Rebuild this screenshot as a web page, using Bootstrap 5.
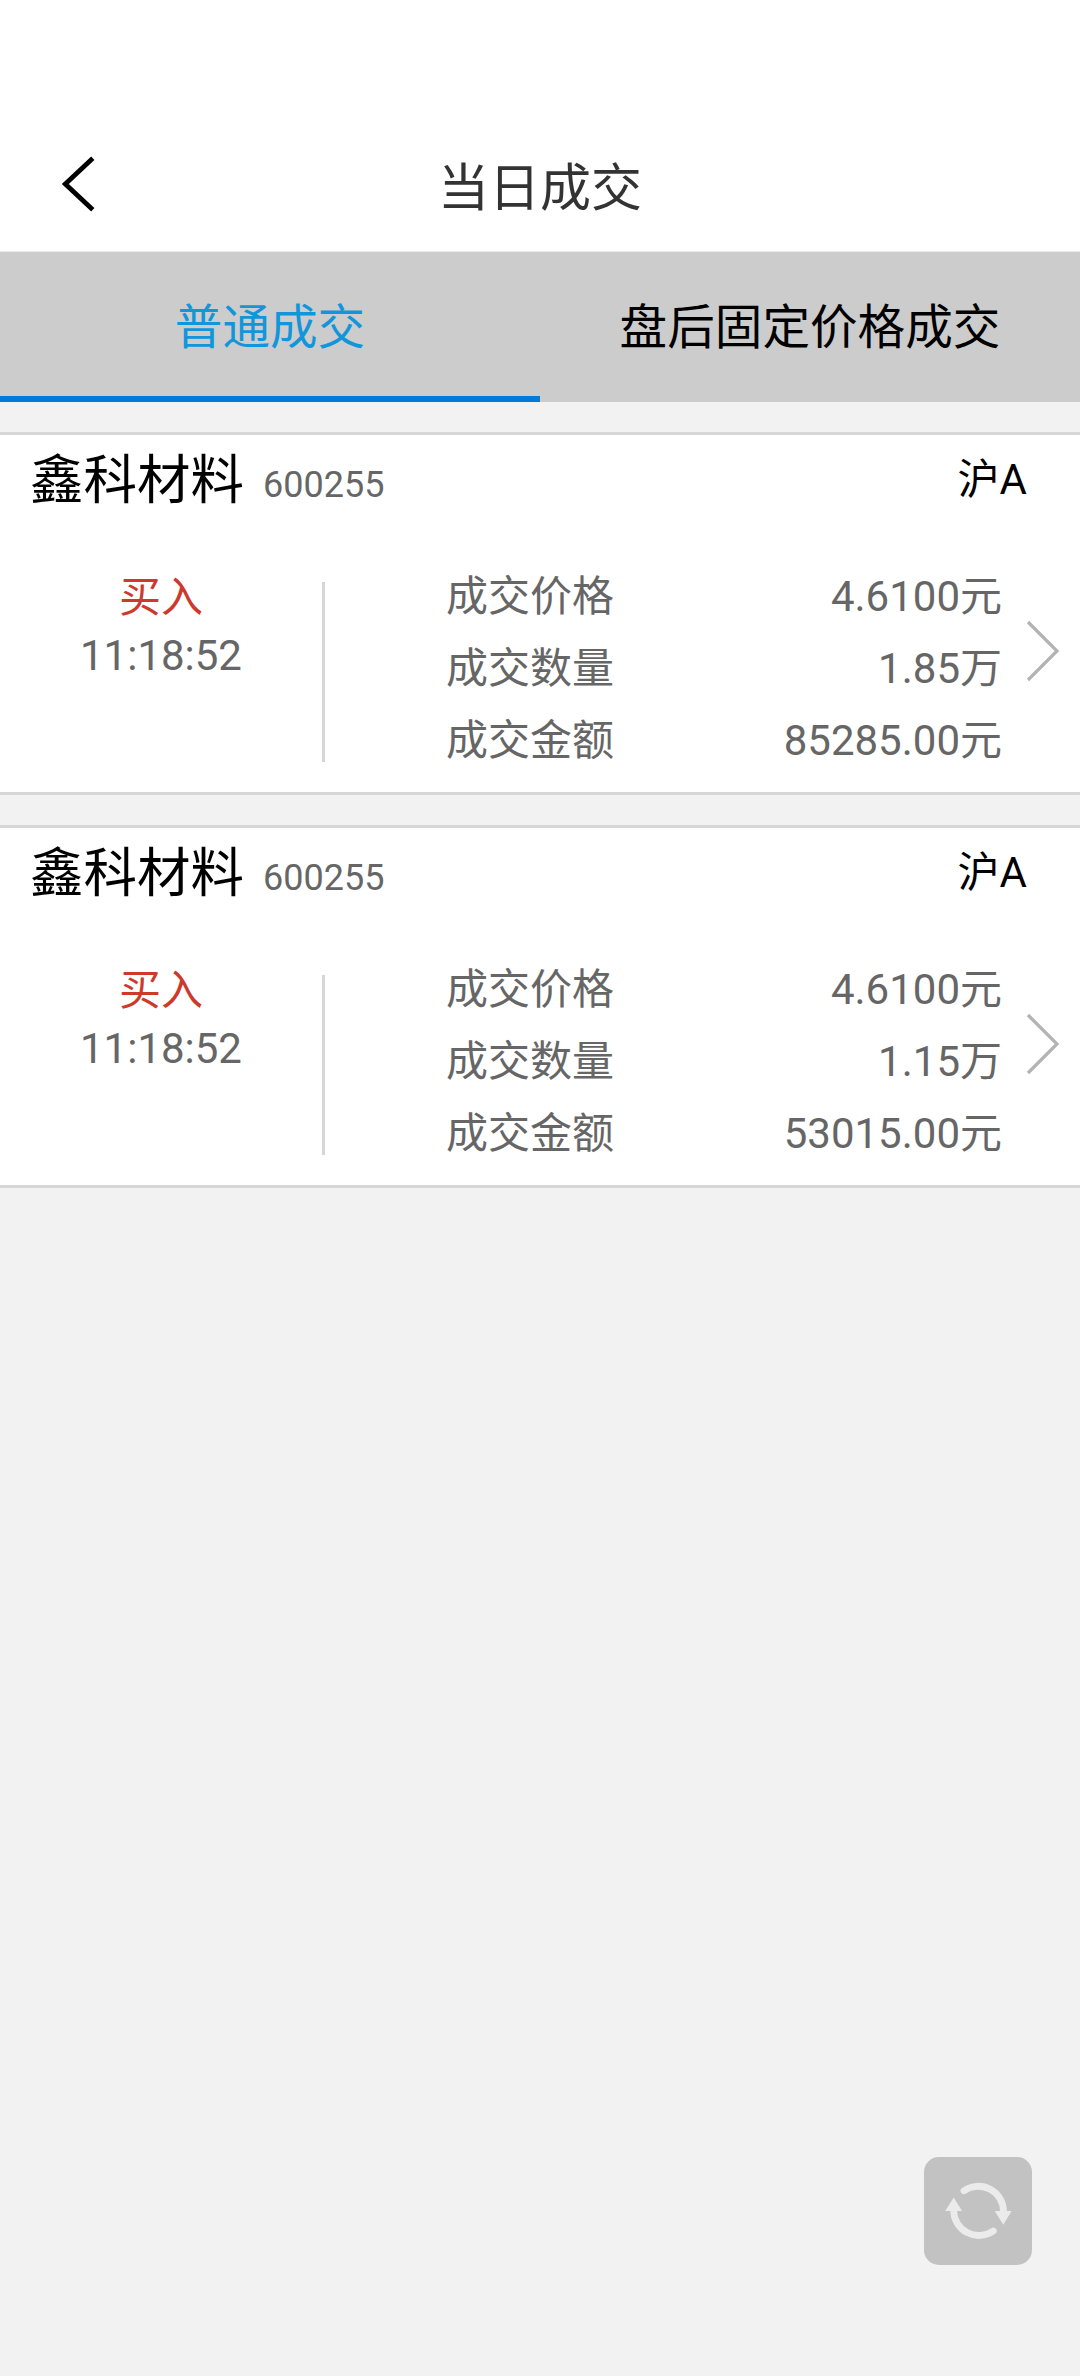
<!DOCTYPE html>
<html lang="zh-CN">
<head>
<meta charset="utf-8">
<meta name="viewport" content="width=device-width, initial-scale=1">
<title>当日成交</title>
<link href="https://cdn.jsdelivr.net/npm/bootstrap@5.3.0/dist/css/bootstrap.min.css" rel="stylesheet">
<style>
  body { font-family: Roboto, "Noto Sans CJK SC", sans-serif; background: #f2f2f2; color: #000; min-height: 2376px; }
  .top-bar { height: 252px; padding: 117px 0 0; border-bottom: 1px solid #e9e9e9; }
  .top-bar .side { width: 160px; }
  .top-bar .back-link { padding-left: 60px; }
  .top-bar h1 { font-size: 51px; line-height: 134px; padding-top: 9px; color: #333; font-weight: 400; }
  .deal-tabs { height: 150px; background: #ccc; }
  .deal-tabs .nav-link { font-size: 47.6px; line-height: 136px; padding: 8px 0 0; color: #000; border-bottom: 6px solid transparent; border-radius: 0; }
  .deal-tabs .nav-link.active { color: #1296db; border-color: #027ad9; }
  .deal-list { padding-top: 30px; gap: 30px; }
  .deal { height: 363px; border-top: 3px solid #d6d6d6; border-bottom: 3px solid #d6d6d6; color: #666; font-size: 42px; }
  .deal-head { height: 90px; padding: 0 53px 0 30px; color: #000; }
  .stock-name { font-size: 53.5px; line-height: 88px; padding-top: 2px; }
  .stock-code { font-size: 36px; line-height: 80px; margin-left: 19px; padding-top: 9px; color: #666; }
  .market { line-height: 89px; height: 90px; }
  .deal-body { height: 267px; }
  .when { width: 322px; line-height: 58px; padding-top: 44px; }
  .buy { color: #cd3a2c; }
  .rule { width: 3px; height: 180px; margin-top: 57px; background: #d6d6d6; }
  .facts { width: 677px; padding: 36px 0 0 121px; line-height: 72px; }
  .go { margin: 95px 0 0 23px; }
  .refresh { right: 48px; top: 2157px; width: 108px; height: 108px; border-radius: 15px; background: #c2c2c2; }
</style>
</head>
<body class="position-relative">
<header class="top-bar bg-white d-flex align-items-center">
  <a class="side back-link d-flex" href="#" aria-label="返回">
    <svg width="38" height="58" viewBox="0 0 38 58" fill="none" stroke="#000" stroke-width="4.8"><path d="M32.800 3.200 5.300 29 32.800 54.800"/></svg>
  </a>
  <h1 class="flex-fill text-center mb-0">当日成交</h1>
  <span class="side"></span>
</header>
<nav class="deal-tabs nav nav-fill">
  <a class="nav-link active w-50" href="#">普通成交</a>
  <a class="nav-link w-50" href="#">盘后固定价格成交</a>
</nav>
<main class="deal-list d-flex flex-column">
  <section class="deal bg-white">
    <div class="deal-head d-flex align-items-center">
      <span class="stock-name">鑫科材料</span><span class="stock-code">600255</span>
      <span class="market ms-auto">沪A</span>
    </div>
    <div class="deal-body d-flex align-items-start">
      <div class="when text-center"><div class="buy">买入</div><div>11:18:52</div></div>
      <div class="rule"></div>
      <div class="facts">
        <div class="d-flex justify-content-between"><span>成交价格</span><span>4.6100元</span></div>
        <div class="d-flex justify-content-between"><span>成交数量</span><span>1.85万</span></div>
        <div class="d-flex justify-content-between"><span>成交金额</span><span>85285.00元</span></div>
      </div>
      <svg class="go" width="36" height="62" viewBox="0 0 36 62" fill="none" stroke="#b3b3b3" stroke-width="3.200"><path d="M3 2 32 31 3 60"/></svg>
    </div>
  </section>
  <section class="deal bg-white">
    <div class="deal-head d-flex align-items-center">
      <span class="stock-name">鑫科材料</span><span class="stock-code">600255</span>
      <span class="market ms-auto">沪A</span>
    </div>
    <div class="deal-body d-flex align-items-start">
      <div class="when text-center"><div class="buy">买入</div><div>11:18:52</div></div>
      <div class="rule"></div>
      <div class="facts">
        <div class="d-flex justify-content-between"><span>成交价格</span><span>4.6100元</span></div>
        <div class="d-flex justify-content-between"><span>成交数量</span><span>1.15万</span></div>
        <div class="d-flex justify-content-between"><span>成交金额</span><span>53015.00元</span></div>
      </div>
      <svg class="go" width="36" height="62" viewBox="0 0 36 62" fill="none" stroke="#b3b3b3" stroke-width="3.200"><path d="M3 2 32 31 3 60"/></svg>
    </div>
  </section>
</main>
<button class="refresh btn border-0 p-0 position-absolute" aria-label="刷新">
  <svg class="d-block" width="108" height="108" viewBox="0 0 108 108">
    <g fill="none" stroke="#ebebeb" stroke-width="6.8" stroke-linecap="round">
      <path d="M40 33.7A25.2 25.2 0 0 1 79.5 55"/>
      <path d="M69.300 74A25.200 25.200 0 0 1 29.700 53"/>
    </g>
    <path d="M70.700 54h16.900l-8.300 13.800zM21.200 54h16.900l-8.400-13.500z" fill="#ebebeb"/>
  </svg>
</button>
<script src="https://cdn.jsdelivr.net/npm/bootstrap@5.3.0/dist/js/bootstrap.bundle.min.js"></script>
</body>
</html>
